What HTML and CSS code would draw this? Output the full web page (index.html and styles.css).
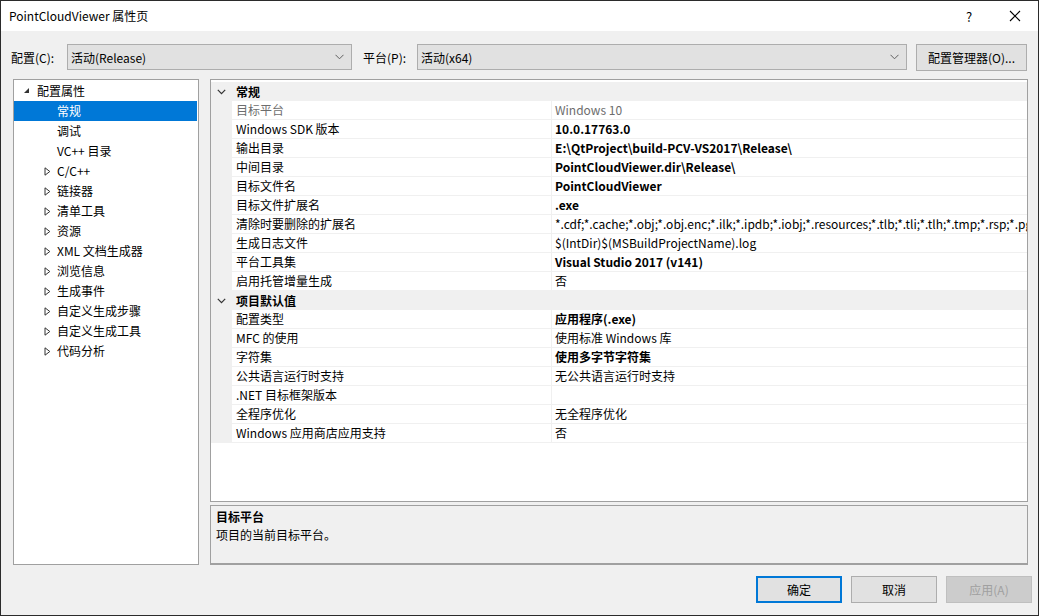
FILE: index.html
```html
<!DOCTYPE html>
<html lang="zh-CN">
<head>
<meta charset="utf-8">
<title>PointCloudViewer 属性页</title>
<link rel="stylesheet" href="styles.css">
</head>
<body>
<div class="window">
  <div class="titlebar">
    <span class="title">PointCloudViewer 属性页</span>
    <span class="help">?</span>
    <span class="close"><svg width="12" height="12" viewBox="0 0 12 12"><path d="M1 1L11 11M11 1L1 11" stroke="#000" stroke-width="1.1" fill="none"/></svg></span>
  </div>
  <div class="body">
    <div class="toolbar">
      <span class="lbl lbl-config">配置(C):</span>
      <div class="combo combo-config"><span>活动(Release)</span><svg class="chev" width="9" height="6" viewBox="0 0 9 6"><path d="M0.5 0.8L4.5 4.8L8.5 0.8" stroke="#606060" fill="none"/></svg></div>
      <span class="lbl lbl-plat">平台(P):</span>
      <div class="combo combo-plat"><span>活动(x64)</span><svg class="chev" width="9" height="6" viewBox="0 0 9 6"><path d="M0.5 0.8L4.5 4.8L8.5 0.8" stroke="#606060" fill="none"/></svg></div>
      <div class="btn btn-mgr">配置管理器(O)...</div>
    </div>
    <div class="panels">
      <div class="tree">
        <div class="node root"><svg class="tri" width="7" height="7" viewBox="0 0 7 7"><path d="M6 1L6 6L1 6Z" fill="#333"/></svg><span>配置属性</span></div>
        <div class="node leaf sel"><span>常规</span></div>
        <div class="node leaf"><span>调试</span></div>
        <div class="node leaf"><span>VC++ 目录</span></div>
        <div class="node child"><svg class="tri2" width="7" height="9" viewBox="0 0 7 9"><path d="M1 0.8L5.8 4.5L1 8.2Z" stroke="#333" fill="none"/></svg><span>C/C++</span></div>
        <div class="node child"><svg class="tri2" width="7" height="9" viewBox="0 0 7 9"><path d="M1 0.8L5.8 4.5L1 8.2Z" stroke="#333" fill="none"/></svg><span>链接器</span></div>
        <div class="node child"><svg class="tri2" width="7" height="9" viewBox="0 0 7 9"><path d="M1 0.8L5.8 4.5L1 8.2Z" stroke="#333" fill="none"/></svg><span>清单工具</span></div>
        <div class="node child"><svg class="tri2" width="7" height="9" viewBox="0 0 7 9"><path d="M1 0.8L5.8 4.5L1 8.2Z" stroke="#333" fill="none"/></svg><span>资源</span></div>
        <div class="node child"><svg class="tri2" width="7" height="9" viewBox="0 0 7 9"><path d="M1 0.8L5.8 4.5L1 8.2Z" stroke="#333" fill="none"/></svg><span>XML 文档生成器</span></div>
        <div class="node child"><svg class="tri2" width="7" height="9" viewBox="0 0 7 9"><path d="M1 0.8L5.8 4.5L1 8.2Z" stroke="#333" fill="none"/></svg><span>浏览信息</span></div>
        <div class="node child"><svg class="tri2" width="7" height="9" viewBox="0 0 7 9"><path d="M1 0.8L5.8 4.5L1 8.2Z" stroke="#333" fill="none"/></svg><span>生成事件</span></div>
        <div class="node child"><svg class="tri2" width="7" height="9" viewBox="0 0 7 9"><path d="M1 0.8L5.8 4.5L1 8.2Z" stroke="#333" fill="none"/></svg><span>自定义生成步骤</span></div>
        <div class="node child"><svg class="tri2" width="7" height="9" viewBox="0 0 7 9"><path d="M1 0.8L5.8 4.5L1 8.2Z" stroke="#333" fill="none"/></svg><span>自定义生成工具</span></div>
        <div class="node child"><svg class="tri2" width="7" height="9" viewBox="0 0 7 9"><path d="M1 0.8L5.8 4.5L1 8.2Z" stroke="#333" fill="none"/></svg><span>代码分析</span></div>
      </div>
      <div class="right">
        <div class="grid">
          <div class="cat"><span class="margin"><svg width="9" height="6" viewBox="0 0 9 6"><path d="M0.8 0.8L4.5 4.6L8.2 0.8" stroke="#333" stroke-width="1.2" fill="none"/></svg></span><span class="catname">常规</span></div>
          <div class="row dim"><span class="margin"></span><span class="name">目标平台</span><span class="val">Windows 10</span></div>
          <div class="row"><span class="margin"></span><span class="name">Windows SDK 版本</span><span class="val b">10.0.17763.0</span></div>
          <div class="row"><span class="margin"></span><span class="name">输出目录</span><span class="val b">E:\QtProject\build-PCV-VS2017\Release\</span></div>
          <div class="row"><span class="margin"></span><span class="name">中间目录</span><span class="val b">PointCloudViewer.dir\Release\</span></div>
          <div class="row"><span class="margin"></span><span class="name">目标文件名</span><span class="val b">PointCloudViewer</span></div>
          <div class="row"><span class="margin"></span><span class="name">目标文件扩展名</span><span class="val b">.exe</span></div>
          <div class="row"><span class="margin"></span><span class="name">清除时要删除的扩展名</span><span class="val">*.cdf;*.cache;*.obj;*.obj.enc;*.ilk;*.ipdb;*.iobj;*.resources;*.tlb;*.tli;*.tlh;*.tmp;*.rsp;*.pgc;*.pgd;*.meta;*.tlog;*.manifest;*.res;*.pch;*.exp;*.idb;*.rep;*.xdc;*.pdb;*_manifest.rc;*.bsc;*.sbr;*.xml;*.metagen;*.bi</span></div>
          <div class="row"><span class="margin"></span><span class="name">生成日志文件</span><span class="val">$(IntDir)$(MSBuildProjectName).log</span></div>
          <div class="row"><span class="margin"></span><span class="name">平台工具集</span><span class="val b">Visual Studio 2017 (v141)</span></div>
          <div class="row"><span class="margin"></span><span class="name">启用托管增量生成</span><span class="val">否</span></div>
          <div class="cat"><span class="margin"><svg width="9" height="6" viewBox="0 0 9 6"><path d="M0.8 0.8L4.5 4.6L8.2 0.8" stroke="#333" stroke-width="1.2" fill="none"/></svg></span><span class="catname">项目默认值</span></div>
          <div class="row"><span class="margin"></span><span class="name">配置类型</span><span class="val b">应用程序(.exe)</span></div>
          <div class="row"><span class="margin"></span><span class="name">MFC 的使用</span><span class="val">使用标准 Windows 库</span></div>
          <div class="row"><span class="margin"></span><span class="name">字符集</span><span class="val b">使用多字节字符集</span></div>
          <div class="row"><span class="margin"></span><span class="name">公共语言运行时支持</span><span class="val">无公共语言运行时支持</span></div>
          <div class="row"><span class="margin"></span><span class="name">.NET 目标框架版本</span><span class="val"></span></div>
          <div class="row"><span class="margin"></span><span class="name">全程序优化</span><span class="val">无全程序优化</span></div>
          <div class="row"><span class="margin"></span><span class="name">Windows 应用商店应用支持</span><span class="val">否</span></div>
        </div>
        <div class="desc">
          <div class="desc-title">目标平台</div>
          <div class="desc-text">项目的当前目标平台。</div>
        </div>
      </div>
    </div>
    <div class="buttons">
      <div class="btn dlg ok">确定</div>
      <div class="btn dlg">取消</div>
      <div class="btn dlg disabled">应用(A)</div>
    </div>
  </div>
</div>
</body>
</html>
```

FILE: styles.css
```css
* { box-sizing: border-box; }
html, body { margin: 0; padding: 0; }
body {
  width: 1039px;
  height: 616px;
  overflow: hidden;
  font-family: "Noto Sans CJK SC", "Noto Sans", sans-serif;
  font-size: 12px;
  color: #000;
  background: #f0f0f0;
}
.window {
  width: 1039px;
  height: 616px;
  border: 1px solid #2b2b2b;
  display: flex;
  flex-direction: column;
  background: #f0f0f0;
}
.titlebar {
  height: 30px;
  background: #fff;
  display: flex;
  align-items: center;
  padding-left: 8px;
  flex-shrink: 0;
}
.title { font-size: 12px; flex: 1; line-height: 14px; }
.help { width: 14px; margin-right: 33px; font-size: 13px; text-align: center; }
.close { width: 12px; height: 12px; margin-right: 17px; display: flex; }
.body { flex: 1; display: flex; flex-direction: column; padding: 13px 0 0 12px; }
.toolbar { display: flex; align-items: center; height: 26px; margin-left: -2px; }
.lbl { display: block; }
.lbl-config { width: 56px; }
.lbl-plat { width: 54px; margin-left: 11px; }
.combo {
  height: 26px;
  border: 1px solid #adadad;
  background: #e1e1e1;
  display: flex;
  align-items: center;
  padding-left: 3px;
  padding-right: 7px;
  justify-content: space-between;
}
.combo-config { width: 285px; }
.combo-plat { width: 490px; }
.chev { display: block; }
.btn {
  border: 1px solid #adadad;
  background: #e1e1e1;
  display: flex;
  align-items: center;
  justify-content: center;
}
.btn-mgr { width: 111px; height: 27px; margin-left: 9px; }
.panels { display: flex; margin-top: 9px; height: 486px; }
.tree {
  width: 186px;
  height: 486px;
  border: 1px solid #a0a0a0;
  background: #fff;
  padding-top: 1px;
}
.node { height: 20px; display: flex; align-items: center; position: relative; }
.node span { line-height: 20px; }
.root { padding-left: 9px; }
.root .tri { margin-right: 7px; margin-top: -1px; }
.leaf { padding-left: 43px; }
.sel { background: #0078d7; color: #fff; margin-right: 1px; }
.child { padding-left: 30px; }
.child .tri2 { margin-right: 6px; }
.right { margin-left: 11px; width: 818px; display: flex; flex-direction: column; }
.grid {
  height: 423px;
  border: 1px solid #a0a0a0;
  background: #fff;
  overflow: hidden;
  padding-top: 2px;
}
.cat, .row { display: flex; height: 19px; }
.margin {
  width: 21px;
  flex-shrink: 0;
  background: #f0f0f0;
  display: flex;
  align-items: center;
  justify-content: center;
}
.cat { background: #f0f0f0; }
.catname { font-weight: bold; padding-left: 4px; line-height: 19px; }
.name, .val {
  line-height: 18px;
  height: 19px;
  border-bottom: 1px solid #f0f0f0;
  white-space: nowrap;
  overflow: hidden;
}
.name { width: 320px; flex-shrink: 0; padding-left: 4px; border-right: 1px solid #f0f0f0; }
.val { flex: 1; padding-left: 3px; }
.b { font-weight: bold; }
.dim .name, .dim .val { color: #6d6d6d; }
.desc {
  margin-top: 3px;
  height: 60px;
  border: 1px solid #a0a0a0;
  border-bottom-width: 2px;
  background: #f0f0f0;
  padding: 2px 0 0 5px;
}
.desc-title { font-weight: bold; line-height: 18px; }
.desc-text { line-height: 18px; }
.buttons { display: flex; justify-content: flex-end; margin-top: 11px; padding-right: 6px; gap: 9px; }
.dlg { width: 86px; height: 27px; }
.ok { border: 2px solid #0078d7; }
.disabled { background: #cccccc; border-color: #bfbfbf; color: #a0a0a0; }
```
